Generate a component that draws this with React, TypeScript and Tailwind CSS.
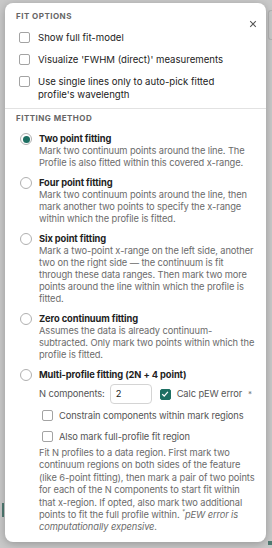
import { useState } from 'react';

function Box({ checked = false, className = '' }: { checked?: boolean; className?: string }) {
  return (
    <span
      className={
        'shrink-0 flex items-center justify-center rounded-[2px] w-[11px] h-[11px] ' +
        (checked ? 'bg-[#1d6f62] border border-[#1d6f62] ' : 'bg-white border border-[#a3a3a3] ') +
        className
      }
    >
      {checked && (
        <svg viewBox="0 0 10 10" className="w-[8px] h-[8px]">
          <path d="M1.5 5.2 L4 7.6 L8.6 2.4" fill="none" stroke="white" strokeWidth="1.6" />
        </svg>
      )}
    </span>
  );
}

function Radio({ checked = false }: { checked?: boolean }) {
  return (
    <span className="shrink-0 mt-[1px] w-[12px] h-[12px] rounded-full border border-[#b0b0b0] bg-white flex items-center justify-center">
      {checked && <span className="w-[7px] h-[7px] rounded-full bg-[#1d6f62]" />}
    </span>
  );
}

const methods = [
  {
    title: 'Two point fitting',
    desc: 'Mark two continuum points around the line. The Profile is also fitted within this covered x-range.',
  },
  {
    title: 'Four point fitting',
    desc: 'Mark two continuum points around the line, then mark another two points to specify the x-range within which the profile is fitted.',
  },
  {
    title: 'Six point fitting',
    desc: 'Mark a two-point x-range on the left side, another two on the right side — the continuum is fit through these data ranges. Then mark two more points around the line within which the profile is fitted.',
  },
  {
    title: 'Zero continuum fitting',
    desc: 'Assumes the data is already continuum-subtracted. Only mark two points within which the profile is fitted.',
  },
];

const options = [
  'Show full fit-model',
  "Visualize 'FWHM (direct)' measurements",
  "Use single lines only to auto-pick fitted profile's wavelength",
];

export default function App() {
  const [method] = useState(0);

  return (
    <div
      className="relative w-[272px] h-[548px] bg-[#c9c9c9] overflow-hidden pl-[5px] pt-[3px]"
      style={{ fontFamily: 'Inter, "Noto Sans", sans-serif' }}
    >
      {/* bits of the page behind the overlay */}
      <span className="absolute left-[2px] top-[503px] w-[2px] h-[14px] bg-[#4f7a72]" />
      <span className="absolute right-0 top-[10px] w-[4px] h-[30px] border border-r-0 border-[#b3b3b3] rounded-l-[3px]" />
      <span className="absolute right-0 bottom-[3px] w-[4px] h-[4px] bg-[#4f7a72]" />

      <div className="relative w-[261px] h-[539px] bg-white rounded-[8px] shadow-[0_2px_8px_rgba(0,0,0,0.25)] text-[#222]">
        <button className="absolute right-[9px] top-[17px] text-[#555]">
          <svg viewBox="0 0 10 10" className="w-[8px] h-[8px]">
            <path d="M1.5 1.5 L8.5 8.5 M8.5 1.5 L1.5 8.5" stroke="currentColor" strokeWidth="1.3" />
          </svg>
        </button>

        {/* fit options */}
        <div className="px-[11px] pt-[7px] pb-[4px]">
          <div className="text-[8px] leading-[12px] font-bold tracking-[0.06em] text-[#666]">FIT OPTIONS</div>
          <div className="mt-[9px] flex flex-col gap-[9px] pl-[3px] pr-[14px]">
            {options.map((o) => (
              <label key={o} className="flex items-start gap-[8px] text-[9.6px] leading-[13px]">
                <Box className="mt-[1px]" />
                <span>{o}</span>
              </label>
            ))}
          </div>
        </div>

        <div className="mt-[3px] h-px bg-[#e2e2e2]" />

        {/* fitting method */}
        <div className="px-[11px] pt-[3px]">
          <div className="text-[8px] leading-[12px] font-bold tracking-[0.06em] text-[#666]">FITTING METHOD</div>
          <div className="mt-[8px] flex flex-col gap-[7px] pl-[4px] text-[9.3px] tracking-[-0.01em]">
            {methods.map((m, i) => (
              <div key={m.title} className="flex items-start gap-[7px]">
                <Radio checked={i === method} />
                <div className="flex-1">
                  <div className="leading-[13px] font-bold text-[#222]">{m.title}</div>
                  <div className="leading-[12px] text-[#6b6b6b]">{m.desc}</div>
                </div>
              </div>
            ))}

            <div className="flex items-start gap-[7px]">
              <Radio />
              <div className="flex-1">
                <div className="leading-[13px] font-bold text-[#222]">Multi-profile fitting (2N + 4 point)</div>
                <div className="mt-[3px] flex items-center whitespace-nowrap text-[#555]">
                  <span>N components:</span>
                  <span className="ml-[5px] w-[42px] h-[20px] border border-[#d4d4d4] rounded-[4px] flex items-center pl-[5px] text-[#222]">2</span>
                  <span className="ml-[8px] flex items-center gap-[6px]">
                    <Box checked />
                    <span>Calc pEW error</span>
                    <span className="text-[8px] text-[#777]">*</span>
                  </span>
                </div>
                <div className="mt-[5px] pl-[3px] flex flex-col gap-[8px] leading-[13px] text-[#555]">
                  <label className="flex items-center gap-[6px]">
                    <Box />
                    <span>Constrain components within mark regions</span>
                  </label>
                  <label className="flex items-center gap-[6px]">
                    <Box />
                    <span>Also mark full-profile fit region</span>
                  </label>
                </div>
                <p className="mt-[4px] leading-[12.4px] text-[#6b6b6b]">
                  Fit N profiles to a data region. First mark two continuum regions on both sides of the feature (like 6-point fitting), then mark a pair of two points for each of the N components to start fit within that x-region. If opted, also mark two additional points to fit the full profile within.{' '}
                  <span className="italic">
                    <span className="text-[6px] leading-none align-top">*</span>pEW error is computationally expensive.
                  </span>
                </p>
              </div>
            </div>
          </div>
        </div>
      </div>
    </div>
  );
}
